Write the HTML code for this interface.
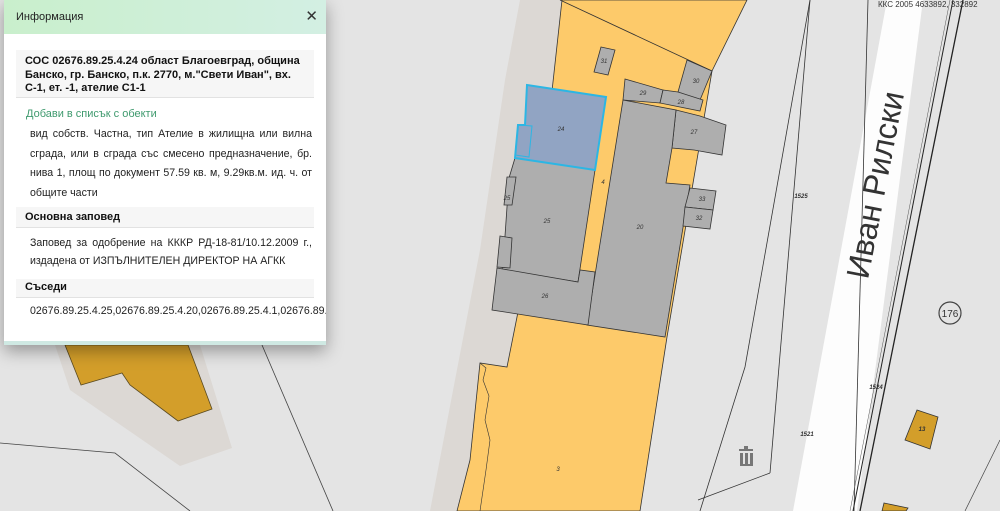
<!DOCTYPE html>
<html><head><meta charset="utf-8"><style>
body{margin:0;width:1000px;height:511px;overflow:hidden;background:#e4e4e4;font-family:"Liberation Sans","DejaVu Sans",sans-serif;position:relative}
svg{position:absolute;left:0;top:0}
#pop{position:absolute;left:4px;top:0;width:322px;height:345px;background:#fff;box-shadow:0 6px 16px rgba(0,0,0,.35);overflow:hidden}
#pop>div{position:absolute}
#hd{left:0;right:0;top:0;height:34px;background:linear-gradient(90deg,#c9efcc,#d3efe3);font-size:11px;color:#222;line-height:34px;padding-left:12px}
#hd b{position:absolute;right:8px;top:0;font-size:15px;color:#333}
.t{left:12px;width:281px;top:50px;height:42px;background:#f6f6f6;border-bottom:1px solid #e2e2e2;font-weight:bold;font-size:11px;line-height:13.7px;padding:5px 8px 0 9px;color:#111}
.lk{color:#3f9a6e;font-size:11px;left:22px;top:107px;line-height:14px}
.p{font-size:10.6px;color:#222;left:26px;width:282px;text-align:justify}
.h{left:12px;width:289px;background:#f6f6f6;border-bottom:1px solid #e2e2e2;font-weight:bold;font-size:11px;padding-left:9px;color:#111}
#bar{left:0;right:0;bottom:0;height:4px;background:#cfe9e3}
</style></head><body>
<svg width="1000" height="511" viewBox="0 0 1000 511">
<polygon points="55,345 200,345 232,448 180,466 70,390" fill="#dcd8d4"/>
<polygon points="65,345 188,345 212,409 178,421 130,385 122,373 81,385" fill="#d39e2a" stroke="#5a4a20" stroke-width=".8"/>
<polyline points="0,443 115,453 190,511" fill="none" stroke="#444" stroke-width=".8"/>
<line x1="262" y1="345" x2="333" y2="511" stroke="#444" stroke-width=".8"/>
<polygon points="520,0 562,0 545,180 508,367 490,420 470,511 430,511 455,380 480,250 505,80" fill="#dcd8d4"/>
<polygon points="562,0 747,0 712,71 667,337 640,511 457,511 470,460 480,363 507,367 517,317 540,200 553,82" fill="#fdca6a" stroke="#333" stroke-width=".8"/>
<polyline points="480,363 486,368 483,380 489,396 485,420 490,440 486,470 480,511" fill="none" stroke="#333" stroke-width=".6"/>
<line x1="560" y1="0" x2="712" y2="71" stroke="#333" stroke-width=".8"/>
<g fill="#aeaeae" stroke="#333" stroke-width=".8">
<polygon points="601,47 615,50 608,75 594,72"/>
<polygon points="687,60 712,71 700,100 678,92"/>
<polygon points="625,79 663,90 660,103 623,100"/>
<polygon points="663,90 678,92 703,100 700,111 660,103"/>
<polygon points="676,110 700,116 726,125 722,155 694,150 672,148"/>
<polygon points="623,100 676,110 672,148 666,183 690,185 665,337 587,325"/>
<polygon points="690,188 716,191 713,210 685,207"/>
<polygon points="685,207 713,210 710,229 683,226"/>
<polygon points="515,158 595,170 578,282 502,270 505,236 509,178"/>
<polygon points="497,268 578,282 580,270 595,272 588,325 492,310"/>
<polygon points="507,177 516,177 512,205 504,205"/>
<polygon points="500,236 512,238 510,268 497,267"/>
<polygon points="917,410 938,417 930,449 905,440" fill="#d39e2a"/>
<polygon points="884,503 908,508 906,511 882,511" fill="#d39e2a"/>
</g>
<polygon points="527,85 606,97 595,170 515,158 518,125 525,125" fill="#91a4c3" stroke="#2cb6e4" stroke-width="2"/>
<polygon points="518,125 532,126 529,157 515,155" fill="none" stroke="#2cb6e4" stroke-width="1"/>
<polygon points="887,0 923,0 857,511 793,511" fill="#fdfdfd"/>
<polyline points="810,0 745,367 700,511" fill="none" stroke="#333" stroke-width=".8"/>
<polyline points="770,473 698,500" fill="none" stroke="#333" stroke-width=".8"/>
<line x1="810" y1="0" x2="770" y2="473" stroke="#333" stroke-width=".8"/>
<line x1="868" y1="0" x2="854" y2="511" stroke="#333" stroke-width=".8"/>
<line x1="953" y1="0" x2="853" y2="511" stroke="#222" stroke-width="1"/>
<line x1="963" y1="0" x2="860" y2="511" stroke="#222" stroke-width="1.3"/>
<line x1="950" y1="0" x2="850" y2="511" stroke="#555" stroke-width=".5"/>
<line x1="1000" y1="440" x2="965" y2="511" stroke="#444" stroke-width=".7"/>
<text x="0" y="0" transform="translate(886,187) rotate(-79)" font-family="Liberation Sans,sans-serif" font-size="32" fill="#333" text-anchor="middle">Иван Рилски</text>
<circle cx="950" cy="313" r="11" fill="none" stroke="#444" stroke-width="1.2"/>
<text x="950" y="317" font-size="10" text-anchor="middle" fill="#333">176</text>
<g fill="#777"><rect x="739" y="449" width="14" height="2"/><rect x="744" y="446" width="4" height="3"/><rect x="740" y="453" width="3" height="12"/><rect x="745" y="453" width="3" height="12"/><rect x="750" y="453" width="3" height="12"/><rect x="740" y="464" width="13" height="2"/></g>
<g font-size="6" fill="#333" text-anchor="middle" font-style="italic">
<text x="604" y="63">31</text><text x="696" y="83">30</text><text x="643" y="95">29</text><text x="681" y="104">28</text><text x="694" y="134">27</text>
<text x="561" y="131">24</text><text x="603" y="184">4</text><text x="507" y="200">25</text><text x="547" y="223">25</text><text x="640" y="229">20</text>
<text x="702" y="201">33</text><text x="699" y="220">32</text><text x="545" y="298">26</text><text x="558" y="471">3</text>
<text x="801" y="198" font-weight="bold">1525</text><text x="807" y="436" font-weight="bold">1521</text><text x="876" y="389" font-weight="bold">1524</text><text x="922" y="431" font-weight="bold">13</text>
</g>
<text x="878" y="7" font-size="8" fill="#333">ККС 2005 4633892, 332892</text>
</svg>
<div id="pop">
<div id="hd">Информация<b>✕</b></div>
<div class="t">СОС 02676.89.25.4.24 област Благоевград, община Банско, гр. Банско, п.к. 2770, м."Свети Иван", вх. С-1, ет. -1, ателие С1-1</div>
<div class="lk">Добави в списък с обекти</div>
<div class="p" style="top:125px;line-height:19.7px">вид собств. Частна, тип Ателие в жилищна или вилна сграда, или в сграда със смесено предназначение, бр. нива 1, площ по документ 57.59 кв. м, 9.29кв.м. ид. ч. от общите части</div>
<div class="h" style="top:207px;height:20px;line-height:20px">Основна заповед</div>
<div class="p" style="top:235px;line-height:17.8px">Заповед за одобрение на КККР РД-18-81/10.12.2009 г., издадена от ИЗПЪЛНИТЕЛЕН ДИРЕКТОР НА АГКК</div>
<div class="h" style="top:279px;height:18px;line-height:17px">Съседи</div>
<div class="p" style="top:303px;line-height:16px;white-space:nowrap;width:auto">02676.89.25.4.25,02676.89.25.4.20,02676.89.25.4.1,02676.89.25.4.3</div>
<div id="bar"></div>
</div>
</body></html>
